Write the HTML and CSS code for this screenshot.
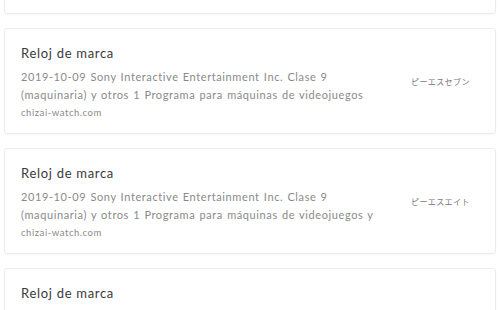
FILE: index.html
```html
<!DOCTYPE html>
<html lang="ja">
<head>
    <meta charset="UTF-8">
    <meta name="viewport" content="width=device-width, initial-scale=1.0">
    <title>Reloj de marca</title>
    <link rel="stylesheet" href="styles.css">
</head>
<body>
    <div class="list">
        <div class="card">
            <div class="main">
                <h3>Reloj de marca</h3>
                <p class="desc">2019-10-09 Sony Interactive Entertainment Inc. Clase 9 (maquinaria) y otros 1 Programa para máquinas de videojuegos</p>
                <p class="source">chizai-watch.com</p>
            </div>
            <div class="side">ピーエスシックス</div>
        </div>
        <div class="card">
            <div class="main">
                <h3>Reloj de marca</h3>
                <p class="desc">2019-10-09 Sony Interactive Entertainment Inc. Clase 9 (maquinaria) y otros 1 Programa para máquinas de videojuegos</p>
                <p class="source">chizai-watch.com</p>
            </div>
            <div class="side">ピーエスセブン</div>
        </div>
        <div class="card">
            <div class="main">
                <h3>Reloj de marca</h3>
                <p class="desc">2019-10-09 Sony Interactive Entertainment Inc. Clase 9 (maquinaria) y otros 1 Programa para máquinas de videojuegos y</p>
                <p class="source">chizai-watch.com</p>
            </div>
            <div class="side">ピーエスエイト</div>
        </div>
        <div class="card">
            <div class="main">
                <h3>Reloj de marca</h3>
                <p class="desc">2019-10-09 Sony Interactive Entertainment Inc. Clase 9 (maquinaria) y otros 1 Programa para máquinas de videojuegos</p>
                <p class="source">chizai-watch.com</p>
            </div>
            <div class="side">ピーエスナイン</div>
        </div>
    </div>
</body>
</html>
```

FILE: styles.css
```css
body {
    margin: 0;
    padding: 0 4px;
    background-color: #fff;
    font-family: Lato, 'Noto Sans CJK JP', sans-serif;
    color: #333;
    overflow: hidden;
}

.list {
    display: flex;
    flex-direction: column;
    gap: 14px;
    margin-top: -92px; /* page is scrolled */
}

.card {
    display: flex;
    align-items: flex-start;
    height: 106px;
    box-sizing: border-box;
    padding: 14px 24px 0 16px;
    border: 1px solid #ececec;
    border-radius: 3px;
    box-shadow: 0 1px 2px rgba(0, 0, 0, 0.04);
}

.card .main {
    flex: 1;
    min-width: 0;
}

.card h3 {
    margin: 0;
    font-size: 13px;
    line-height: 20px;
    font-weight: 400;
    letter-spacing: 0.7px;
    color: #3a3a3a;
}

.card .desc {
    margin: 5px 0 0;
    font-size: 11px;
    line-height: 17.5px;
    letter-spacing: 0.6px;
    word-spacing: 0.8px;
    color: #8a8a8a;
    max-width: 366px;
}

.card .source {
    margin: 2px 0 0;
    font-size: 9.5px;
    line-height: 15px;
    letter-spacing: 0.55px;
    color: #8a8a8a;
}

.card .side {
    align-self: center;
    width: 60px;
    margin-top: -14px;
    font-family: 'Noto Sans CJK JP', sans-serif;
    font-size: 8px;
    letter-spacing: 0.4px;
    color: #777;
}
```
